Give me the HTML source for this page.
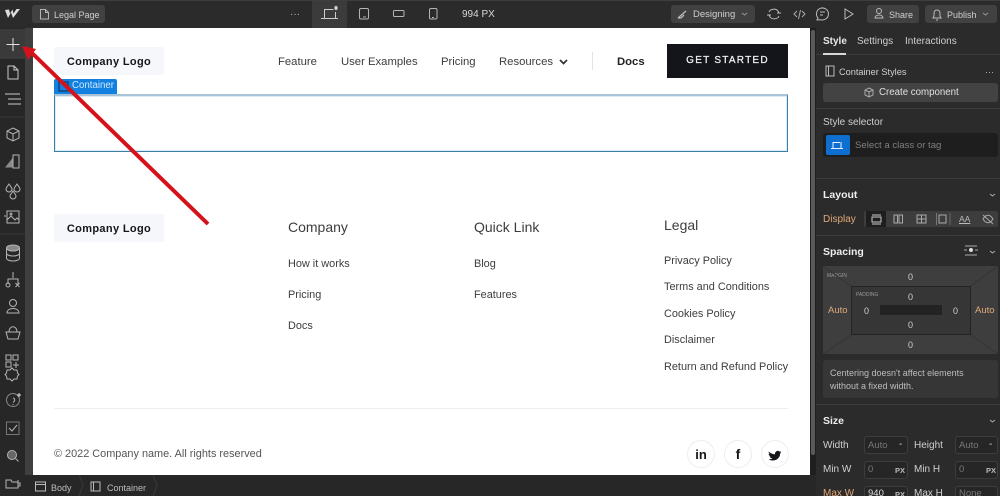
<!DOCTYPE html>
<html><head><meta charset="utf-8"><style>
html,body{margin:0;padding:0;width:1000px;height:496px;overflow:hidden;background:#2b2b2b;font-family:"Liberation Sans",sans-serif}
#r{position:relative;width:1000px;height:496px;overflow:hidden}
.t{position:absolute;white-space:nowrap;line-height:14px}
.b{position:absolute;box-sizing:border-box}
.c{color:#3d3d3d;font-size:11.3px}
.f{color:#3d3d3d;font-size:10.9px}
.w{color:#cfcfcf;font-size:10px}
svg{position:absolute;left:0;top:0}
.logo{position:absolute;left:54px;width:110px;height:28px;background:#f6f7fb;border-radius:2px;color:#16161a;font-size:11px;font-weight:bold;line-height:30px;text-align:center;letter-spacing:.35px}
.in{position:absolute;box-sizing:border-box;height:18px;border:1px solid #3d3d3d;border-radius:3px;background:#262626}
.c2{position:absolute;width:28px;height:28px;box-sizing:border-box;border:1px solid #ededed;border-radius:50%;top:440px}
</style></head><body><div id="r">
<!-- chrome -->
<div class="b" style="left:0;top:0;width:1000px;height:28px;background:#2b2b2b"></div>
<div class="b" style="left:0;top:0;width:1000px;height:1px;background:#3e3e3e"></div>
<div class="b" style="left:0;top:28px;width:25px;height:468px;background:#272727"></div>
<div class="b" style="left:25px;top:28px;width:8px;height:447px;background:#3f3f3f"></div>
<div class="b" style="left:0;top:29px;width:25px;height:30px;background:#3a3a3a"></div>
<div class="b" style="left:312px;top:1px;width:35px;height:27px;background:#3b3b3b"></div>
<!-- canvas -->
<div class="b" style="left:33px;top:28px;width:777px;height:447px;background:#fff"></div>
<div class="b" style="left:810px;top:28px;width:7px;height:447px;background:#1f1f1f"></div>
<div class="b" style="left:811px;top:30px;width:4px;height:425px;background:#5a5a5a;border-radius:2px"></div>
<div class="b" style="left:0;top:475px;width:816px;height:21px;background:#272727"></div>
<div class="b" style="left:816px;top:28px;width:184px;height:468px;background:#2b2b2b"></div>

<!-- top bar -->
<div class="b" style="left:32px;top:5px;width:73px;height:18px;background:#414141;border-radius:3px"></div>
<div class="t w" style="left:54px;top:8px;color:#d0d0d0;font-size:9px">Legal Page</div>
<div class="t" style="left:290px;top:8px;color:#bbb;font-size:10px">···</div>
<div class="t w" style="left:462px;top:8px;font-size:10px;color:#d8d8d8">994 PX</div>
<div class="b" style="left:671px;top:5px;width:84px;height:18px;background:#414141;border-radius:3px"></div>
<div class="t w" style="left:693px;top:8px;font-size:9.5px">Designing</div>
<div class="b" style="left:867px;top:5px;width:52px;height:18px;background:#414141;border-radius:3px"></div>
<div class="t w" style="left:889px;top:8px;font-size:9px">Share</div>
<div class="b" style="left:925px;top:5px;width:72px;height:18px;background:#414141;border-radius:3px"></div>
<div class="t w" style="left:947px;top:8px;font-size:9px">Publish</div>

<!-- page nav -->
<div class="logo" style="top:47px">Company Logo</div>
<div class="t c" style="left:278px;top:55px">Feature</div>
<div class="t c" style="left:341px;top:55px">User Examples</div>
<div class="t c" style="left:441px;top:55px">Pricing</div>
<div class="t c" style="left:499px;top:55px">Resources</div>
<div class="b" style="left:592px;top:52px;width:1px;height:18px;background:#e4e4e4"></div>
<div class="t" style="left:617px;top:55px;font-size:11.3px;font-weight:bold;color:#222">Docs</div>
<div class="b" style="left:667px;top:44px;width:121px;height:34px;background:#14151a"></div>
<div class="t" style="left:667px;top:54px;width:121px;text-align:center;font-size:10px;color:#f0f0f0;letter-spacing:1.25px;-webkit-text-stroke:.25px #f0f0f0">GET STARTED</div>

<!-- selected container -->
<div class="b" style="left:54px;top:79px;width:63px;height:15px;background:#1280e0;border-radius:2px 2px 0 0"></div>
<div class="t" style="left:72px;top:79px;font-size:9.7px;color:#cfe8ff">Container</div>
<div class="b" style="left:54px;top:94px;width:734px;height:58px;border:1px solid #3e7fa8;border-top:2px solid #a9c3d6;box-shadow:inset 0 0 0 1px #dcebf6"></div>

<!-- footer -->
<div class="logo" style="top:214px">Company Logo</div>
<div class="t" style="left:288px;top:220px;font-size:14px;color:#3d3d3d">Company</div>
<div class="t f" style="left:288px;top:257px">How it works</div>
<div class="t f" style="left:288px;top:288px">Pricing</div>
<div class="t f" style="left:288px;top:319px">Docs</div>
<div class="t" style="left:474px;top:220px;font-size:14px;color:#3d3d3d">Quick Link</div>
<div class="t f" style="left:474px;top:257px">Blog</div>
<div class="t f" style="left:474px;top:288px">Features</div>
<div class="t" style="left:664px;top:218px;font-size:14px;color:#3d3d3d">Legal</div>
<div class="t f" style="left:664px;top:254px">Privacy Policy</div>
<div class="t f" style="left:664px;top:280px">Terms and Conditions</div>
<div class="t f" style="left:664px;top:307px">Cookies Policy</div>
<div class="t f" style="left:664px;top:333px">Disclaimer</div>
<div class="t f" style="left:664px;top:360px">Return and Refund Policy</div>
<div class="b" style="left:54px;top:408px;width:734px;height:1px;background:#efefef"></div>
<div class="t" style="left:54px;top:447px;font-size:10.9px;color:#555">© 2022 Company name. All rights reserved</div>
<div class="c2" style="left:687px"></div><div class="c2" style="left:724px"></div><div class="c2" style="left:761px"></div>
<div class="t" style="left:687px;top:448px;width:28px;text-align:center;font-size:13px;font-weight:bold;color:#16161a">in</div>
<div class="t" style="left:724px;top:447px;width:28px;text-align:center;font-size:14px;font-weight:bold;color:#16161a">f</div>

<!-- right panel -->
<div class="b" style="left:816px;top:54px;width:184px;height:1px;background:#3c3c3c"></div>
<div class="b" style="left:823px;top:53px;width:23px;height:2px;background:#d8d8d8"></div>
<div class="t" style="left:823px;top:35px;font-size:10px;font-weight:bold;color:#e8e8e8">Style</div>
<div class="t w" style="left:857px;top:35px">Settings</div>
<div class="t w" style="left:905px;top:35px">Interactions</div>
<div class="t w" style="left:839px;top:65px;font-size:9.2px">Container Styles</div>
<div class="t" style="left:985px;top:65px;font-size:9px;color:#bbb">···</div>
<div class="b" style="left:823px;top:83px;width:175px;height:19px;background:#434343;border-radius:3px"></div>
<div class="t" style="left:879px;top:86px;font-size:9.7px;color:#e0e0e0">Create component</div>
<div class="b" style="left:816px;top:108px;width:184px;height:1px;background:#3c3c3c"></div>
<div class="t w" style="left:823px;top:116px;font-size:10px">Style selector</div>
<div class="b" style="left:823px;top:133px;width:175px;height:24px;background:#1e1e1e;border-radius:3px"></div>
<div class="b" style="left:826px;top:135px;width:24px;height:20px;background:#0f6fd0;border-radius:2px"></div>
<div class="t" style="left:855px;top:139px;font-size:9.6px;color:#7f7f7f">Select a class or tag</div>
<div class="b" style="left:816px;top:178px;width:184px;height:1px;background:#3c3c3c"></div>
<div class="t" style="left:823px;top:188px;font-size:10.5px;font-weight:bold;color:#eee">Layout</div>
<div class="t" style="left:823px;top:213px;font-size:10px;color:#e0a878">Display</div>
<div class="b" style="left:864px;top:211px;width:134px;height:16px;background:#3d3d3d;border-radius:2px"></div>
<div class="b" style="left:866px;top:211px;width:20px;height:16px;background:#1e1e1e"></div>
<div class="t" style="left:959px;top:212px;font-size:8.5px;color:#bbb;text-decoration:underline">AA</div>
<div class="b" style="left:816px;top:235px;width:184px;height:1px;background:#3c3c3c"></div>
<div class="t" style="left:823px;top:245px;font-size:10.5px;font-weight:bold;color:#eee">Spacing</div>
<!-- spacing box -->
<div class="b" style="left:823px;top:266px;width:175px;height:88px;background:#3e3e3e"></div>
<div class="b" style="left:851px;top:286px;width:120px;height:49px;background:#363636;border:1px solid #232323"></div>
<div class="b" style="left:880px;top:305px;width:62px;height:10px;background:#232323"></div>
<div class="t" style="left:827px;top:269px;font-size:5px;color:#999">MARGIN</div>
<div class="t" style="left:856px;top:288px;font-size:5px;color:#999">PADDING</div>
<div class="t w" style="left:908px;top:270px;font-size:9px">0</div>
<div class="t w" style="left:908px;top:290px;font-size:9px">0</div>
<div class="t w" style="left:864px;top:304px;font-size:9px">0</div>
<div class="t w" style="left:953px;top:304px;font-size:9px">0</div>
<div class="t w" style="left:908px;top:318px;font-size:9px">0</div>
<div class="t w" style="left:908px;top:338px;font-size:9px">0</div>
<div class="t" style="left:828px;top:304px;font-size:9.5px;color:#e0a878">Auto</div>
<div class="t" style="left:975px;top:304px;font-size:9.5px;color:#e0a878">Auto</div>
<div class="b" style="left:823px;top:360px;width:175px;height:38px;background:#363636;border-radius:3px"></div>
<div class="t" style="left:830px;top:367px;font-size:9px;color:#bdbdbd;line-height:12.500px">Centering doesn't affect elements<br>without a fixed width.</div>
<div class="b" style="left:816px;top:404px;width:184px;height:1px;background:#3c3c3c"></div>
<div class="t" style="left:823px;top:414px;font-size:10.5px;font-weight:bold;color:#eee">Size</div>
<div class="t w" style="left:823px;top:439px">Width</div>
<div class="in" style="left:864px;top:436px;width:44px"></div>
<div class="t" style="left:868px;top:439px;font-size:9.5px;color:#777">Auto</div>
<div class="t w" style="left:899px;top:438px">-</div>
<div class="t w" style="left:914px;top:439px">Height</div>
<div class="in" style="left:955px;top:436px;width:43px"></div>
<div class="t" style="left:959px;top:439px;font-size:9.5px;color:#777">Auto</div>
<div class="t w" style="left:989px;top:438px">-</div>
<div class="t w" style="left:823px;top:463px">Min W</div>
<div class="in" style="left:864px;top:461px;width:44px"></div>
<div class="t" style="left:868px;top:463px;font-size:9.5px;color:#777">0</div>
<div class="t" style="left:895px;top:464px;font-size:7.5px;font-weight:bold;color:#bbb">PX</div>
<div class="t w" style="left:914px;top:463px">Min H</div>
<div class="in" style="left:955px;top:461px;width:43px"></div>
<div class="t" style="left:959px;top:463px;font-size:9.5px;color:#777">0</div>
<div class="t" style="left:986px;top:464px;font-size:7.5px;font-weight:bold;color:#bbb">PX</div>
<div class="t" style="left:823px;top:487px;font-size:10px;color:#e0a878">Max W</div>
<div class="in" style="left:864px;top:486px;width:44px"></div>
<div class="t" style="left:868px;top:487px;font-size:9.5px;color:#ddd">940</div>
<div class="t" style="left:895px;top:488px;font-size:7.5px;font-weight:bold;color:#bbb">PX</div>
<div class="t w" style="left:914px;top:487px">Max H</div>
<div class="in" style="left:955px;top:486px;width:43px"></div>
<div class="t" style="left:959px;top:487px;font-size:9.5px;color:#777">None</div>

<!-- bottom bar -->
<div class="t" style="left:51px;top:481px;font-size:9px;color:#bdbdbd">Body</div>
<div class="t" style="left:107px;top:481px;font-size:9px;color:#bdbdbd">Container</div>

<!-- icons & arrow -->
<svg width="1000" height="496" viewBox="0 0 1000 496" fill="none" stroke="#b4b4b4" stroke-width="1">
<!-- logo -->
<path d="M5 10 L8 18 L11 12.500 L13 18 L20 9 L16.500 9 L13.500 13.500 L12.500 9.500 L10 13.500 L9 9.500Z" fill="#dcdcdc" stroke="none"/>
<!-- top bar -->
<path d="M40.500 9.500h5l3 3v6.500h-8z M45.500 9.500v3h3" stroke="#b5b5b5"/>
<path d="M324.500 18V9.500h9 M321 18.500h17 M335.500 12v6" stroke="#ccc"/><path d="M335 6l2 4M337 6l-2 4M334 8h4" stroke="#ddd"/>
<rect x="359.500" y="8.500" width="9" height="10.500" rx="1.500"/><path d="M363 17h3"/>
<rect x="393.500" y="10.500" width="10.500" height="6" rx="1"/>
<rect x="429.500" y="8.500" width="7.500" height="10.500" rx="1.500"/><path d="M432 17.500h2"/>
<path d="M678 18l8-7M678 18l3 0 3-3" stroke="#bbb" stroke-width="1.300"/><path d="M742 13l2.500 2 2.500-2" stroke="#999"/>
<path d="M769 12a5 4 0 0 1 9-1l1 2M779 16a5 4 0 0 1-9 1l-1-2M777 13h4M767 15h4" stroke="#bbb"/>
<path d="M797 11l-3 3 3 3M802 11l3 3-3 3M800.500 10l-2 9" stroke="#aaa"/>
<path d="M817 20l1-2a6 6 0 1 1 3 1.800z M820 12h5M820 15h3" stroke="#bbb"/>
<path d="M845 9l8 5-8 5z" stroke="#bbb"/>
<circle cx="879" cy="11" r="2.500" stroke="#bbb"/><path d="M875 18c0-4 8-4 8 0z" stroke="#bbb"/>
<path d="M933 18h8l-1-2v-3a3 3 0 0 0-6 0v3zM936 20h2" stroke="#bbb"/><path d="M983 13l2.500 2 2.500-2" stroke="#999"/>
<!-- left -->
<path d="M13 38v13M6.500 44.500h13" stroke="#e2e2e2"/>
<path d="M8 66h6l4 4v9H8z M14 66v4h4" stroke="#c8c8c8"/>
<path d="M5 94h15M8 99h13M8 104h13" stroke="#c8c8c8"/>
<path d="M0 117h25M0 234h25" stroke="#3a3a3a"/>
<path d="M13 128l6 3v7l-6 3-6-3v-7z M7 131l6 3 6-3M13 134v7"/>
<path d="M6 167l8-10 4 2v8z" fill="#8a8a8a" stroke="#8a8a8a"/><rect x="13" y="155" width="6" height="13" fill="#272727"/>
<path d="M9 184c-2 3-3 4-3 5a3 3 0 0 0 6 0c0-1-1-2-3-5zM17 184c-2 3-3 4-3 5a3 3 0 0 0 6 0c0-1-1-2-3-5zM13 191c-2 3-3 4-3 5a3 3 0 0 0 6 0c0-1-1-2-3-5z"/>
<path d="M7 211h12v12H7z M7 220l4-4 4 4 2-2 2 2"/><circle cx="11" cy="214" r="1"/><path d="M4 216l2 0"/>
<ellipse cx="13" cy="248" rx="6.500" ry="3" fill="#888"/><path d="M6.500 248v10c0 4 13 4 13 0v-10M6.500 253c0 4 13 4 13 0"/>
<path d="M13 272v6M8 284v-5h10v5"/><circle cx="8" cy="285" r="2"/><path d="M15.500 283l4 4M19.500 283l-4 4"/>
<circle cx="13" cy="303" r="3.500"/><path d="M7 313c0-6 12-6 12 0z"/>
<path d="M6 332h14l-2 7H8z M9 332c0-7 8-7 8 0"/>
<rect x="6" y="355" width="5" height="5"/><rect x="13" y="355" width="5" height="5"/><rect x="6" y="362" width="5" height="5"/><path d="M13 365h6M16 362v6"/>
<path d="M12 368l2 2h3l.5 3 1.500 1.500-1.500 1.500-.5 3h-3l-2 2-2-2H7l-.5-3L5 374.500 6.500 373l.5-3h3z"/>
<circle cx="13" cy="400" r="6.500" stroke="#888"/><path d="M13 398a2 2 0 0 1 1 3.500l-1 1M13 404v1"/><path d="M19 393v4M17 395h4" stroke="#ddd"/>
<rect x="6.500" y="422" width="12.500" height="12.500" stroke="#777"/><path d="M9 428l3 3 5-6"/>
<circle cx="12" cy="455" r="4.500" fill="#666"/><path d="M15.500 458.500l3 3"/>
<path d="M6 480h5l1 2h6v-2 8H6z M18 483l2 0v3h-2"/>
<!-- bottom -->
<rect x="35.500" y="482" width="10" height="9" stroke="#bbb"/><path d="M35.500 484.500h10" stroke="#bbb"/>
<rect x="91" y="482" width="9" height="9" stroke="#bbb"/><path d="M93.500 482v9" stroke="#bbb"/>
<path d="M79 475l4 10-4 11M153 475l4 10-4 11" stroke="#3a3a3a"/>
<!-- right -->
<rect x="826" y="66" width="8" height="10" stroke="#bbb"/><path d="M828.500 66v10" stroke="#bbb"/>
<path d="M869 88l4 2v5l-4 2-4-2v-5zM865 90l4 2 4-2M869 92v5" stroke="#aaa"/>
<path d="M833 148.500v-6h7M831 148.500h12M841 142v6" stroke="#e8f2ff"/>
<path d="M990 194l2.500 2 2.500-2M990 251l2.500 2 2.500-2M990 420l2.500 2 2.500-2" stroke="#aaa"/>
<rect x="872" y="217" width="9" height="5" stroke="#ccc"/><path d="M872 215h9M872 224h9" stroke="#ccc"/>
<rect x="894" y="215" width="3.500" height="8" stroke="#aaa"/><rect x="899" y="215" width="3.500" height="8" stroke="#aaa"/>
<rect x="917" y="215" width="9" height="8" stroke="#aaa"/><path d="M921.500 215v8M917 219h9" stroke="#aaa"/>
<rect x="939" y="215" width="7" height="8" stroke="#aaa"/><path d="M936.500 213v12" stroke="#777"/><path d="M950 213v12" stroke="#666"/>
<path d="M983 219c3-5 7-5 10 0-3 5-7 5-10 0zM983 215l10 9" stroke="#aaa"/>
<circle cx="971" cy="250" r="2" fill="#ddd" stroke="none"/><path d="M965 246h12M965 255h12M964 250h3M975 250h3" stroke="#aaa"/>
<path d="M823 266l28 20M998 266l-27 20M823 354l28-19M998 354l-27-19" stroke="#343434"/>
<!-- chevron -->
<path d="M560 60l3.500 3.500L567 60" stroke="#333" stroke-width="1.700"/>
<!-- container tag -->
<rect x="59" y="82" width="9" height="9" stroke="#123a66" stroke-width="1.300"/>
<!-- twitter -->
<path d="M768.500 451.500c2 1.800 4 2.700 6.500 2.800-.4-2.800 2.800-4.500 4.600-2.700l1.400-.5-.9 1.500 1.300-.3-1.300 1.400c0 4-3.600 6.800-7.200 6.800-1.800 0-3.200-.4-4.100-1.100 1.400 0 2.700-.4 3.600-1.100-1.300 0-2.500-.9-3-1.800h1.300c-1.300-.5-2.100-1.600-2.100-2.700l1.300 .3c-1.200-.9-1.500-2.200-1.400-3.600z" fill="#16161a" stroke="none"/>
<!-- red arrow -->
<path d="M208 224L32 53" stroke="#d5121a" stroke-width="4"/>
<path d="M22 46l14 3-8 11z" fill="#d5121a" stroke="none"/>
</svg>
</div></body></html>
